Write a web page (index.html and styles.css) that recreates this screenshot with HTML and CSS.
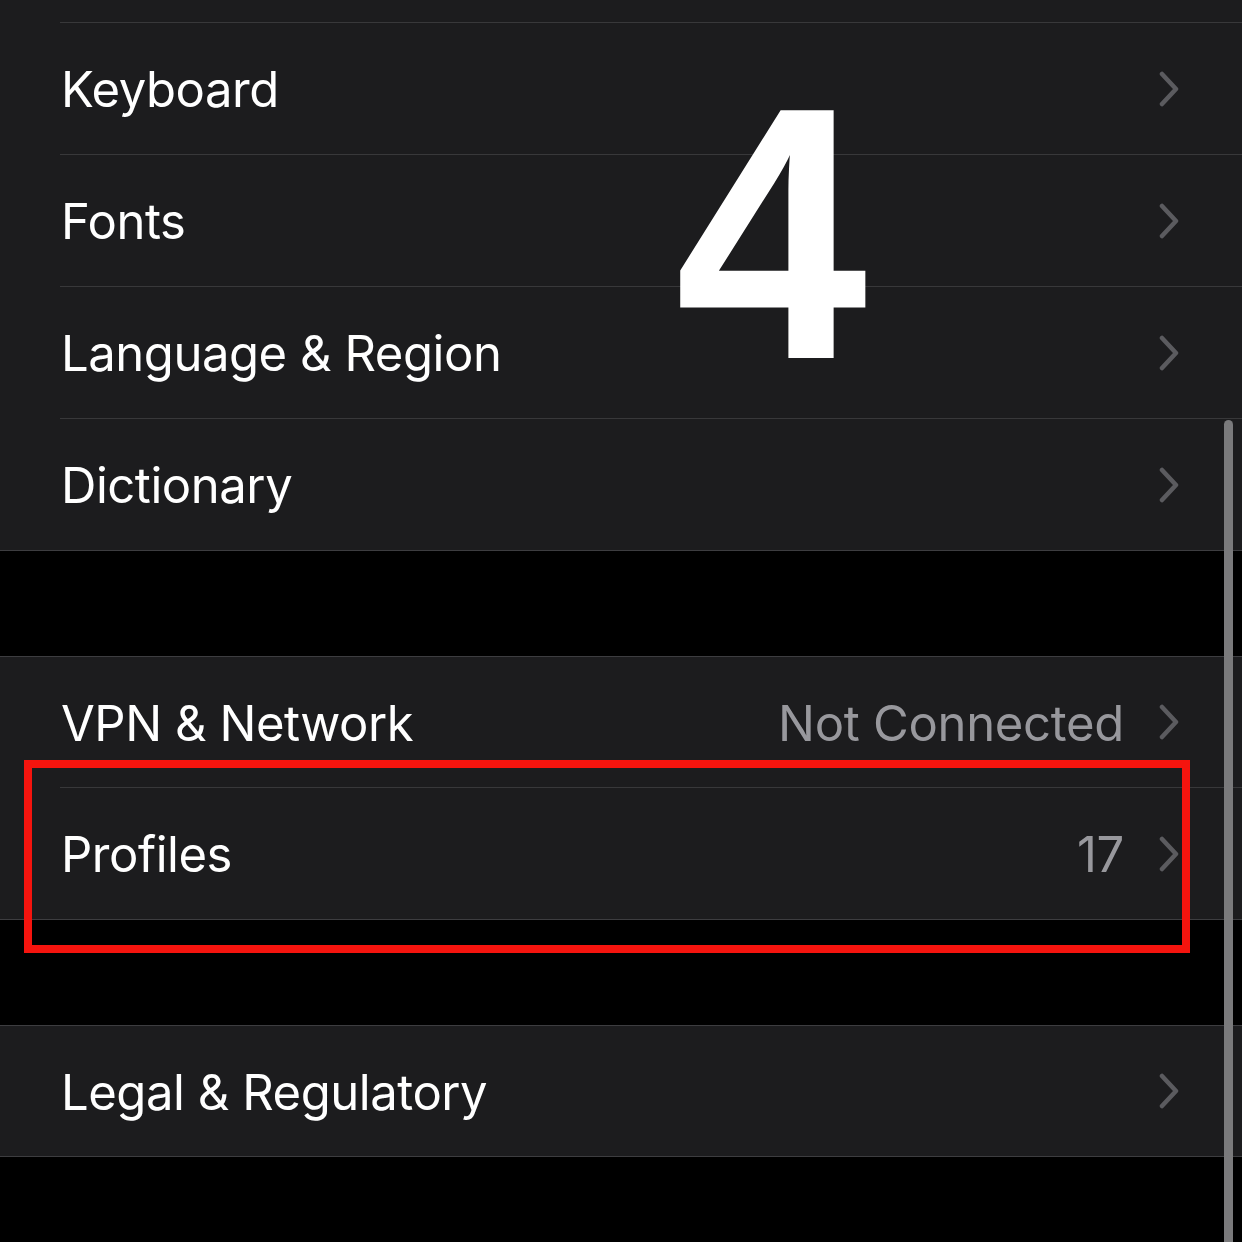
FILE: index.html
```html
<!DOCTYPE html>
<html>
<head>
<meta charset="utf-8">
<link rel="stylesheet" href="styles.css">
</head>
<body>
<div class="screen">
  <div class="group group-first">
    <div class="stub"></div>
    <div class="row"><div class="body"><span class="label">Keyboard</span><span class="chev"><svg viewBox="0 0 22 36" width="22" height="36"><path d="M4 3 L18 18 L4 33" fill="none" stroke="#5b5b5f" stroke-width="4.5" stroke-linecap="round" stroke-linejoin="round"/></svg></span></div></div>
    <div class="row"><div class="body"><span class="label">Fonts</span><span class="chev"><svg viewBox="0 0 22 36" width="22" height="36"><path d="M4 3 L18 18 L4 33" fill="none" stroke="#5b5b5f" stroke-width="4.5" stroke-linecap="round" stroke-linejoin="round"/></svg></span></div></div>
    <div class="row"><div class="body"><span class="label">Language &amp; Region</span><span class="chev"><svg viewBox="0 0 22 36" width="22" height="36"><path d="M4 3 L18 18 L4 33" fill="none" stroke="#5b5b5f" stroke-width="4.5" stroke-linecap="round" stroke-linejoin="round"/></svg></span></div></div>
    <div class="row"><div class="body"><span class="label">Dictionary</span><span class="chev"><svg viewBox="0 0 22 36" width="22" height="36"><path d="M4 3 L18 18 L4 33" fill="none" stroke="#5b5b5f" stroke-width="4.5" stroke-linecap="round" stroke-linejoin="round"/></svg></span></div></div>
  </div>

  <div class="group">
    <div class="row"><div class="body"><span class="label">VPN &amp; Network</span><span class="value">Not Connected</span><span class="chev"><svg viewBox="0 0 22 36" width="22" height="36"><path d="M4 3 L18 18 L4 33" fill="none" stroke="#5b5b5f" stroke-width="4.5" stroke-linecap="round" stroke-linejoin="round"/></svg></span></div></div>
    <div class="row"><div class="body"><span class="label">Profiles</span><span class="value">17</span><span class="chev"><svg viewBox="0 0 22 36" width="22" height="36"><path d="M4 3 L18 18 L4 33" fill="none" stroke="#5b5b5f" stroke-width="4.5" stroke-linecap="round" stroke-linejoin="round"/></svg></span></div></div>
  </div>

  <div class="group">
    <div class="row"><div class="body"><span class="label">Legal &amp; Regulatory</span><span class="chev"><svg viewBox="0 0 22 36" width="22" height="36"><path d="M4 3 L18 18 L4 33" fill="none" stroke="#5b5b5f" stroke-width="4.5" stroke-linecap="round" stroke-linejoin="round"/></svg></span></div></div>
  </div>

  <div class="step">4</div>
  <div class="highlight"></div>
  <div class="scrollbar"></div>
</div>
</body>
</html>
```

FILE: styles.css
```css
* { box-sizing: border-box; }
html, body { margin: 0; padding: 0; background: #000; }
.screen {
  position: relative;
  width: 1242px;
  height: 1242px;
  overflow: hidden;
  background: #000;
  font-family: Inter, "Noto Sans", sans-serif;
}
.group {
  background: #1c1c1e;
  border-top: 1px solid #3d3d40;
  border-bottom: 1px solid #3d3d40;
  margin-bottom: 105px;
}
.group-first { border-top: none; }
.stub { height: 22px; }
.row {
  height: 132px;
  padding-left: 60px;
  display: flex;
}
.body {
  flex: 1;
  display: flex;
  align-items: center;
  border-top: 1px solid #38383a;
  padding-left: 1px;
  padding-right: 62px;
}
.group:not(.group-first) .row:first-child .body { border-top: none; }
.group:not(.group-first) .row:first-child { height: 130px; }
.label {
  flex: 1;
  color: #fff;
  font-size: 49px;
  letter-spacing: -0.45px;
  padding-top: 2px;
}
.value {
  color: #98989d;
  font-size: 49px;
  letter-spacing: -0.3px;
  margin-right: 34px;
  padding-top: 2px;
}
.chev { display: flex; width: 22px; height: 36px; }
.step {
  position: absolute;
  left: 675px;
  top: 53px;
  font-family: "Liberation Sans", Arial, sans-serif;
  font-weight: bold;
  font-size: 360px;
  line-height: 1;
  color: #fff;
  transform: scaleX(0.96);
  transform-origin: left top;
}
.highlight {
  position: absolute;
  left: 24px;
  top: 760px;
  width: 1166px;
  height: 193px;
  border: 8px solid #f5140e;
}
.scrollbar {
  position: absolute;
  left: 1224px;
  top: 420px;
  width: 9px;
  height: 900px;
  border-radius: 5px;
  background: #7a7a7c;
}
```
